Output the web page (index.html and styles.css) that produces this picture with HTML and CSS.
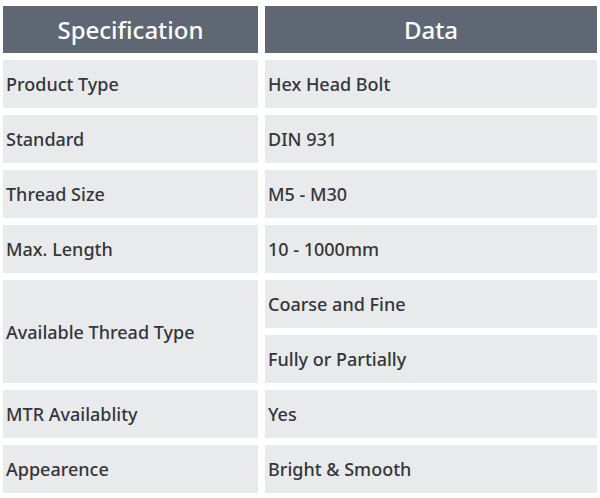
FILE: index.html
```html
<!DOCTYPE html>
<html lang="en">
<head>
<meta charset="utf-8">
<title>Specification</title>
<link rel="stylesheet" href="styles.css">
</head>
<body>
<div class="spec">
  <div class="head">Specification</div>
  <div class="head">Data</div>
  <div class="cell">Product Type</div>
  <div class="cell">Hex Head Bolt</div>
  <div class="cell">Standard</div>
  <div class="cell">DIN 931</div>
  <div class="cell">Thread Size</div>
  <div class="cell">M5 - M30</div>
  <div class="cell">Max. Length</div>
  <div class="cell">10 - 1000mm</div>
  <div class="cell span2">Available Thread Type</div>
  <div class="cell">Coarse and Fine</div>
  <div class="cell">Fully or Partially</div>
  <div class="cell">MTR Availablity</div>
  <div class="cell">Yes</div>
  <div class="cell">Appearence</div>
  <div class="cell">Bright &amp; Smooth</div>
</div>
</body>
</html>
```

FILE: styles.css
```css
html, body {
  margin: 0;
  padding: 0;
  background: #ffffff;
}
.spec {
  display: grid;
  grid-template-columns: 255px 332px;
  grid-template-rows: 47px repeat(8, 48px);
  gap: 7px;
  padding: 6px 3px 5px 3px;
  font-family: "Noto Sans", "Lato", sans-serif;
}
.head {
  background: #5f6674;
  color: #ffffff;
  font-size: 24px;
  font-weight: 500;
  display: flex;
  align-items: center;
  justify-content: center;
}
.cell {
  background: #e9eaec;
  color: #33363a;
  font-size: 18px;
  font-weight: 500;
  letter-spacing: 0;
  display: flex;
  align-items: center;
  padding-left: 3px;
}
.span2 {
  grid-row: span 2;
}
```
